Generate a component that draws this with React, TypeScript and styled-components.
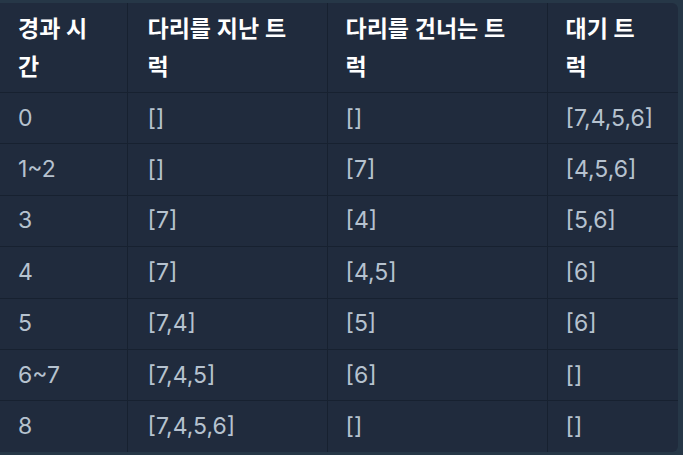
import styled, { createGlobalStyle } from "styled-components";

const GlobalStyle = createGlobalStyle`
  html, body {
    margin: 0;
    padding: 0;
    background: #263747;
  }
`;

const headers = ["경과 시간", "다리를 지난 트럭", "다리를 건너는 트럭", "대기 트럭"];

const rows = [
  ["0", "[]", "[]", "[7,4,5,6]"],
  ["1~2", "[]", "[7]", "[4,5,6]"],
  ["3", "[7]", "[4]", "[5,6]"],
  ["4", "[7]", "[4,5]", "[6]"],
  ["5", "[7,4]", "[5]", "[6]"],
  ["6~7", "[7,4,5]", "[6]", "[]"],
  ["8", "[7,4,5,6]", "[]", "[]"],
];

const widths = [127, 200, 220, 131];

function App() {
  return (
    <>
      <GlobalStyle />
      <Page>
        <Table>
          <colgroup>
            {widths.map((w, i) => (
              <col key={i} style={{ width: w }} />
            ))}
          </colgroup>
          <thead>
            <tr>
              {headers.map((h) => (
                <Th key={h}>{h}</Th>
              ))}
            </tr>
          </thead>
          <tbody>
            {rows.map((r, i) => (
              <tr key={i}>
                {r.map((c, j) => (
                  <Td key={j}>{c}</Td>
                ))}
              </tr>
            ))}
          </tbody>
        </Table>
      </Page>
    </>
  );
}

const Page = styled.div`
  padding: 3px 5px 3px 0;
  width: 683px;
  height: 455px;
  box-sizing: border-box;
  overflow: hidden;
`;

const Table = styled.table`
  width: 678px;
  table-layout: fixed;
  border-collapse: collapse;
  background: #202b3d;
  border-radius: 0 6px 6px 0;
  overflow: hidden;
  font-family: Inter, "Noto Sans CJK KR", sans-serif;
  font-size: 23px;
`;

const Th = styled.th`
  height: 89px;
  padding: 0 25px 0 18px;
  text-align: left;
  vertical-align: middle;
  color: #ffffff;
  font-weight: 600;
  line-height: 38px;
  word-break: break-all;
  border-right: 1px solid #172130;
  border-bottom: 1px solid #172130;
  &:nth-child(2) {
    padding-left: 20px;
  }
  &:last-child {
    border-right: none;
  }
`;

const Td = styled.td`
  height: 50.4px;
  padding: 0 18px;
  color: #b6c2cf;
  vertical-align: middle;
  line-height: 37px;
  border-right: 1px solid #172130;
  border-bottom: 1px solid #172130;
  &:nth-child(2) {
    padding-left: 20px;
  }
  &:last-child {
    border-right: none;
  }
  tr:last-child & {
    border-bottom: none;
  }
`;

export default App;
